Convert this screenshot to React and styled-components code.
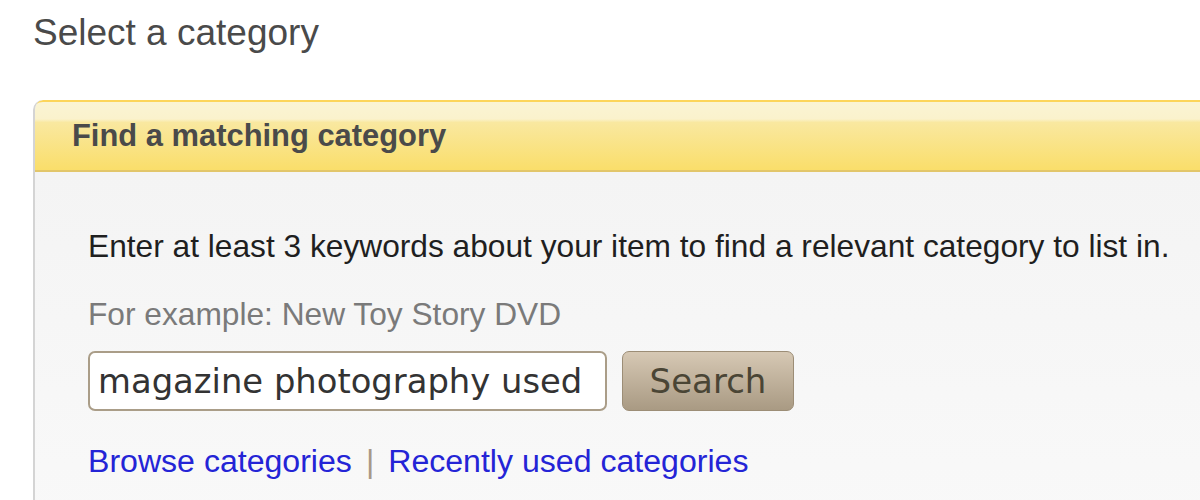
import React, { useState } from "react";
import styled, { createGlobalStyle } from "styled-components";

const GlobalStyle = createGlobalStyle`
  html, body {
    margin: 0;
    padding: 0;
    background: #ffffff;
    overflow: hidden;
  }
  body {
    font-family: "Liberation Sans", Arial, sans-serif;
  }
`;

const Page = styled.div`
  padding: 12px 0 0 33px;
  width: 1300px;
`;

const Title = styled.h1`
  margin: 0 0 46px;
  font-size: 37px;
  font-weight: normal;
  line-height: 42px;
  color: #4a4a4a;
`;

const Panel = styled.section`
  width: 1220px;
  border: 2px solid #d4d4d4;
  border-top: none;
  border-radius: 10px 10px 0 0;
  background: linear-gradient(#f3f3f3, #f9f9f9);
  overflow: hidden;
`;

const PanelHeader = styled.div`
  height: 68px;
  margin: 0 -2px;
  display: flex;
  align-items: center;
  padding-left: 39px;
  border-top: 2px solid #fcd55a;
  border-bottom: 2px solid #e2c66a;
  border-radius: 10px 10px 0 0;
  background: linear-gradient(#faf4d4 0%, #faf2cc 25%, #f9e8a0 30%, #fade6a 100%);

  h2 {
    margin: 0;
    font-size: 30.9px;
    font-weight: bold;
    color: #4a4a4a;
  }
`;

const PanelBody = styled.div`
  padding: 56px 0 60px 53px;
  display: flex;
  flex-direction: column;
`;

const Intro = styled.p`
  margin: 0;
  font-size: 31.7px;
  line-height: 36px;
  color: #1f1f1f;
`;

const Example = styled.p`
  margin: 32px 0 0;
  font-size: 31.7px;
  line-height: 36px;
  color: #7a7a7a;
`;

const SearchRow = styled.div`
  margin-top: 19px;
  display: flex;
  gap: 15px;
`;

const Field = styled.input`
  box-sizing: border-box;
  width: 519px;
  height: 60px;
  padding: 0 8px;
  border: 2px solid #aa9d88;
  border-radius: 7px;
  background: #ffffff;
  font-family: "DejaVu Sans", sans-serif;
  font-size: 33.8px;
  color: #333333;
  outline: none;
`;

const SearchButton = styled.button`
  box-sizing: border-box;
  width: 172px;
  height: 60px;
  padding: 0;
  border: 1px solid #9c8d76;
  border-radius: 7px;
  background: linear-gradient(#d6c8b4, #a99a83);
  font-family: "DejaVu Sans", sans-serif;
  font-size: 34px;
  color: #4a4535;
  cursor: pointer;
`;

const Links = styled.div`
  margin-top: 32px;
  display: flex;
  align-items: center;
  gap: 14px;
  font-size: 32.1px;
  line-height: 36px;
`;

const Link = styled.a`
  color: #2424d6;
  text-decoration: none;
`;

const Divider = styled.span`
  color: #a89888;
`;

export default function App() {
  const [keywords, setKeywords] = useState("magazine photography used");
  return (
    <Page>
      <GlobalStyle />
      <Title>Select a category</Title>
      <Panel>
        <PanelHeader>
          <h2>Find a matching category</h2>
        </PanelHeader>
        <PanelBody>
          <Intro>
            Enter at least 3 keywords about your item to find a relevant category to list in.
          </Intro>
          <Example>For example: New Toy Story DVD</Example>
          <SearchRow>
            <Field value={keywords} onChange={(e) => setKeywords(e.target.value)} />
            <SearchButton>Search</SearchButton>
          </SearchRow>
          <Links>
            <Link href="#">Browse categories</Link>
            <Divider>|</Divider>
            <Link href="#">Recently used categories</Link>
          </Links>
        </PanelBody>
      </Panel>
    </Page>
  );
}
